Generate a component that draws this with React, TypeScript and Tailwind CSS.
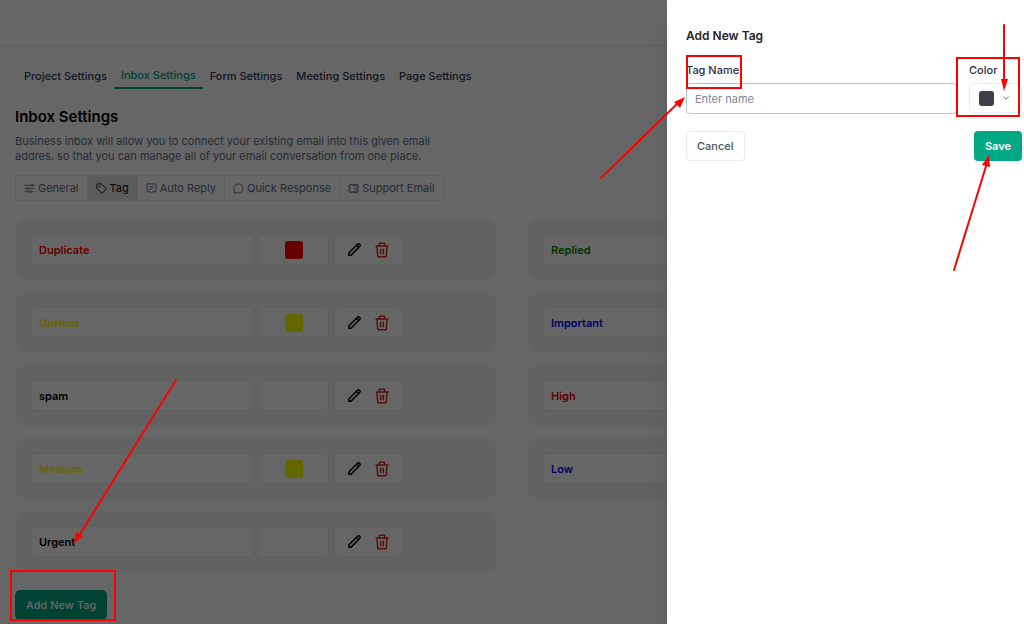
import { useState } from "react";
import { HiOutlinePencil } from "react-icons/hi";
import { ChevronDown, MessageCircle, Tag } from "lucide-react";

const tabs = [
  "Project Settings",
  "Inbox Settings",
  "Form Settings",
  "Meeting Settings",
  "Page Settings",
];

const tags = [
  { name: "Duplicate", text: "text-[#ff0000]", swatch: "bg-[#ff0000]" },
  { name: "Replied", text: "text-[#008000]", swatch: "bg-[#008000]" },
  { name: "OnHold", text: "text-[#ffff00]", swatch: "bg-[#ffff00]" },
  { name: "Important", text: "text-[#0000ff]", swatch: "bg-[#0000ff]" },
  { name: "spam", text: "text-black", swatch: "bg-transparent" },
  { name: "High", text: "text-[#ff0000]", swatch: "bg-[#ff0000]" },
  { name: "Medium", text: "text-[#ffff00]", swatch: "bg-[#ffff00]" },
  { name: "Low", text: "text-[#0000ff]", swatch: "bg-[#0000ff]" },
  { name: "Urgent", text: "text-black", swatch: "bg-transparent" },
];

const iconProps = {
  viewBox: "0 0 24 24",
  fill: "none",
  stroke: "currentColor",
  strokeWidth: 2,
  strokeLinecap: "round",
  strokeLinejoin: "round",
} as const;

function SlidersIcon() {
  return (
    <svg {...iconProps} className="size-[11px] shrink-0">
      <path d="M2 5h12M20 5h2M2 12h3M11 12h11M2 19h9M17 19h5" />
      <circle cx="17" cy="5" r="2.5" />
      <circle cx="8" cy="12" r="2.5" />
      <circle cx="14" cy="19" r="2.5" />
    </svg>
  );
}

function ReplyIcon() {
  return (
    <svg {...iconProps} className="size-[11px] shrink-0">
      <path d="M4 2h16a2 2 0 0 1 2 2v13a2 2 0 0 1-2 2h-5l-3 3-3-3H4a2 2 0 0 1-2-2V4a2 2 0 0 1 2-2z" />
      <path d="M7 8h10M7 13h7" />
    </svg>
  );
}

function TicketIcon() {
  return (
    <svg {...iconProps} strokeWidth={2.4} className="size-[11px] shrink-0">
      <path d="M4 4h16a2 2 0 0 1 2 2v3a3 3 0 0 0 0 6v3a2 2 0 0 1-2 2H4a2 2 0 0 1-2-2v-3a3 3 0 0 0 0-6V6a2 2 0 0 1 2-2z" />
      <path d="M15 4v3M15 11v2M15 17v3" />
    </svg>
  );
}

function TrashIcon() {
  return (
    <svg {...iconProps} strokeWidth={2.2} className="size-4">
      <path d="M3 6h18M8 6V3a1 1 0 0 1 1-1h6a1 1 0 0 1 1 1v3M4.5 6l1 15a1 1 0 0 0 1 1h11a1 1 0 0 0 1-1l1-15M10 11v6.5M14 11v6.5" />
    </svg>
  );
}

const sections = [
  { name: "General", icon: <SlidersIcon /> },
  { name: "Tag", icon: <Tag className="size-[11px] shrink-0" /> },
  { name: "Auto Reply", icon: <ReplyIcon /> },
  { name: "Quick Response", icon: <MessageCircle className="size-[11px] shrink-0" /> },
  { name: "Support Email", icon: <TicketIcon /> },
];

function TagCard({ tag }: { tag: (typeof tags)[number] }) {
  return (
    <li className="flex gap-1 rounded-xl bg-[#f5f5f5] p-[15px]">
      <div
        className={`flex h-[31px] w-[224px] items-center rounded-[4px] border border-[#ededed] bg-white px-2 font-semibold ${tag.text}`}
      >
        {tag.name}
      </div>
      <div className="flex w-[71px] items-center justify-center rounded-[4px] border border-[#ededed] bg-white">
        <span className={`size-[18px] rounded-[3px] ${tag.swatch}`} />
      </div>
      <div className="flex w-[70px] items-center justify-center gap-3 rounded-[4px] border border-[#ededed] bg-white">
        <button type="button" aria-label={`Edit ${tag.name}`} className="text-black">
          <HiOutlinePencil className="size-[15px] stroke-[2.4]" />
        </button>
        <button type="button" aria-label={`Delete ${tag.name}`} className="text-[#dc2626]">
          <TrashIcon />
        </button>
      </div>
    </li>
  );
}

function SettingsPage() {
  return (
    <div className="h-full overflow-hidden bg-white">
      <header className="h-[46px] border-b border-gray-200" />
      <main className="px-[15px] pt-[17px]">
        <nav className="flex px-[2px]">
          {tabs.map((tab) => (
            <a
              key={tab}
              href="#"
              className={
                tab === "Inbox Settings"
                  ? "border-b-2 border-[#00a884] px-[7px] pt-1 pb-1 font-medium text-[#00a884]"
                  : "px-[7px] pt-[5px] pb-1 font-medium text-[#344054]"
              }
            >
              {tab}
            </a>
          ))}
        </nav>
        <h1 className="mt-[18px] text-[15px] leading-5 font-semibold text-black">
          Inbox Settings
        </h1>
        <p className="mt-[7px] max-w-[420px] leading-[15px] text-[#667085]">
          Business inbox will allow you to connect your existing email into this given email
          addres. so that you can manage all of your email conversation from one place.
        </p>
        <div className="mt-[11px] flex w-fit overflow-hidden rounded-[4px] border border-gray-200">
          {sections.map((section) => (
            <button
              key={section.name}
              type="button"
              className={
                section.name === "Tag"
                  ? "flex h-6 items-center gap-[3px] border-r border-gray-200 bg-[#e5e5e5] px-2 text-black"
                  : "flex h-6 items-center gap-[3px] border-r border-gray-200 px-2 text-[#667085] last:border-r-0"
              }
            >
              {section.icon}
              {section.name}
            </button>
          ))}
        </div>
        <ul className="mt-[18px] grid grid-cols-2 gap-x-[30px] gap-y-3">
          {tags.map((tag) => (
            <TagCard key={tag.name} tag={tag} />
          ))}
        </ul>
        <button
          type="button"
          className="mt-[18px] h-[30px] rounded-[5px] bg-[#00a884] px-[11px] font-medium text-white"
        >
          Add New Tag
        </button>
      </main>
    </div>
  );
}

function AddTagDrawer() {
  const [name, setName] = useState("");

  return (
    <aside className="absolute inset-y-0 right-0 w-[357px] bg-white pt-[26px] pr-[2px] pl-[19px] shadow-xl">
      <h2 className="text-[12px] leading-5 font-semibold text-[#1f2328]">Add New Tag</h2>
      <form onSubmit={(e) => e.preventDefault()}>
        <div className="mt-4 flex gap-3">
          <div className="min-w-0 flex-1">
            <label htmlFor="tag-name" className="block font-medium text-[#27303f]">
              Tag Name
            </label>
            <input
              id="tag-name"
              type="text"
              value={name}
              onChange={(e) => setName(e.target.value)}
              placeholder="Enter name"
              className="mt-[5px] block h-[31px] w-full rounded-[4px] border border-[#bcc2cc] px-2 placeholder:text-[#7a869c] focus:outline-none"
            />
          </div>
          <div className="w-[53px]">
            <label htmlFor="tag-color" className="block font-medium text-[#27303f]">
              Color
            </label>
            <button
              id="tag-color"
              type="button"
              className="mt-[5px] flex h-[30px] w-full items-center gap-[7px] rounded-[4px] border border-[#eaecf0] px-[9px]"
            >
              <span className="size-[15px] rounded-[3px] bg-[#3f4048]" />
              <ChevronDown className="size-[10px] text-[#475467]" />
            </button>
          </div>
        </div>
        <div className="mt-[17px] flex justify-between">
          <button
            type="button"
            className="h-[30px] rounded-[4px] border border-[#eaecf0] px-[10px] font-medium text-[#475467]"
          >
            Cancel
          </button>
          <button
            type="submit"
            className="h-[30px] rounded-[4px] bg-[#00a884] px-[11px] font-semibold text-white"
          >
            Save
          </button>
        </div>
      </form>
    </aside>
  );
}

// Callout boxes and arrows drawn over the whole screen
function Callouts() {
  return (
    <svg
      className="pointer-events-none absolute top-0 left-0"
      width="1024"
      height="624"
      fill="none"
      stroke="#ff0000"
      strokeWidth="2"
      strokeLinecap="round"
    >
      <rect x="11" y="571" width="104" height="49" />
      <rect x="687" y="56" width="54" height="32" />
      <rect x="957" y="58" width="62" height="58" />
      <path d="M176 380L80 534M601 178L678 103M1004 25V82M954 270L987 163" />
      <g fill="#ff0000" stroke="none">
        <path d="M74 544L76 532L83 536Z" />
        <path d="M685 97L674 102L680 108Z" />
        <path d="M1004 91L1001 79H1008Z" />
        <path d="M989 155L982 165L990 167Z" />
      </g>
    </svg>
  );
}

export default function App() {
  return (
    <div className="relative h-screen overflow-hidden font-['Inter',sans-serif] text-[11px] leading-4">
      <SettingsPage />
      <div className="absolute inset-0 bg-black/60" />
      <AddTagDrawer />
      <Callouts />
    </div>
  );
}
